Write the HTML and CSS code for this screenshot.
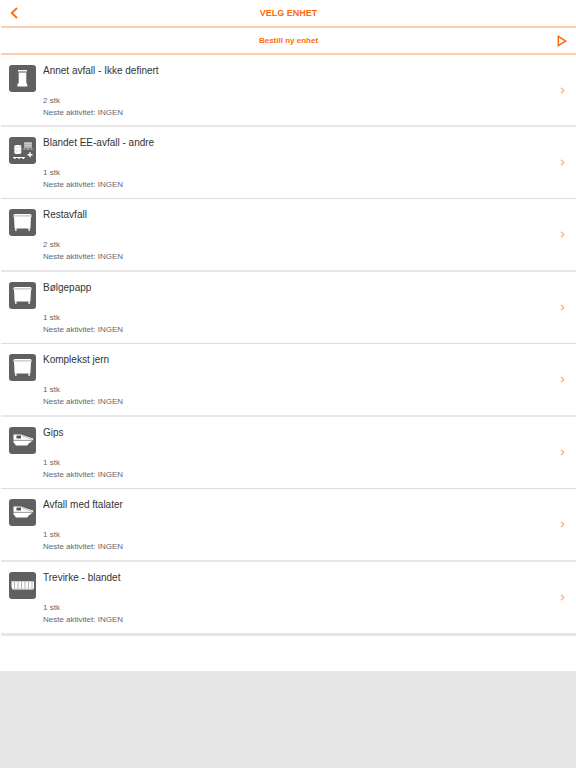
FILE: index.html
```html
<!DOCTYPE html>
<html lang="no">
<head>
    <meta charset="utf-8">
    <meta name="viewport" content="width=device-width, initial-scale=1">
    <title>Velg enhet</title>
    <link rel="stylesheet" href="styles.css">
</head>
<body>
    <!-- shared icons -->
    <svg class="icon-defs" width="0" height="0" aria-hidden="true">
        <symbol id="chevron" viewBox="0 0 5 7">
            <path d="M1 .8 3.7 3.5 1 6.2" fill="none" stroke="#ffb080" stroke-width="1.3"/>
        </symbol>
        <symbol id="bin" viewBox="0 0 27 27">
            <path d="M9 5h9v1.500H9zM9.700 7.500h7.600V18l.9 1v2.500H8.500V19l1.200-1z" fill="#fff"/>
            <path d="M9.500 7h8" stroke="#aaa" stroke-width=".7"/>
        </symbol>
        <symbol id="mixed" viewBox="0 0 27 27">
            <path d="M5.300 9c0-1.300 7-1.300 7 0v7c0 1.300-7 1.300-7 0z" fill="#fff"/>
            <path d="M5.300 9.500c1 1 6 1 7 0M5.300 13.300c1 .8 6 .8 7 0" fill="none" stroke="#bbb" stroke-width=".5"/>
            <path d="M15 5h8v6h-8z" fill="#a5a5a5"/>
            <path d="M15 6.500h8M15 8.500h8M17 5v6M19 5v6M21 5v6M15 12h8" stroke="#ddd" stroke-width=".5"/>
            <path d="M15 11.300v1.500M19 11.300v1.500M23 11.300v1.500" stroke="#ddd" stroke-width=".8"/>
            <path d="M4 20.500h12" stroke="#fff" stroke-width="1"/>
            <path d="M5 21.500h1.500M9.300 21.500h1.500M13.500 21.500H15" stroke="#fff" stroke-width="1"/>
            <path d="M21 15.200v5M18.500 17.700h5" stroke="#fff" stroke-width="1.400"/>
        </symbol>
        <symbol id="container" viewBox="0 0 27 27">
            <path d="M4.500 6q.5-1 1.500-1h15q1 0 1.500 1v2H22l-.6 11.500h-.6V22h-1.300v-2.500h-12V22H6.200v-2.500h-.6L5 8h-.5z" fill="#fff"/>
            <path d="M5 6.900h17" stroke="#aaa" stroke-width=".9"/>
        </symbol>
        <symbol id="skip" viewBox="0 0 27 27">
            <path d="M4.500 7.500H12l12.500 4.300-.6 1.200H4.500zM4.500 13.500h19.300L20.500 16l-.8.300-.8 1.700-1.500.5H6.800L6 17l-1.500-1.500z" fill="#fff"/>
            <path d="M7.500 8.500H12v3H7.500z" fill="#555"/>
            <path d="m12.500 8.800 10.500 3.500M4.500 13.200h19" stroke="#999" stroke-width=".6"/>
        </symbol>
        <symbol id="trailer" viewBox="0 0 27 27">
            <path d="M2.500 9H24l1 1.500V16l-1 1.500H3.500L2.500 15z" fill="#fff"/>
            <path d="M3 9.500h21M3.500 17h20" stroke="#bbb" stroke-width=".8"/>
            <path d="M5.500 10v6.500M9 10v6.500M12.500 10v6.500M16 10v6.500M19.500 10v6.500M23 10v6.500" stroke="#999" stroke-width=".8"/>
        </symbol>
    </svg>

    <div class="page">
        <header class="header">
            <button class="back" type="button" aria-label="Tilbake">
                <svg width="8" height="12" viewBox="0 0 8 12"><path d="M7 1 1.700 6 7 11" fill="none" stroke="#ff6a0d" stroke-width="1.800"/></svg>
            </button>
            <h1>VELG ENHET</h1>
        </header>
        <a class="order" href="#">
            <span>Bestill ny enhet</span>
            <svg width="10" height="12" viewBox="0 0 10 12"><path d="M1.300 1.300v9.400L8.700 6z" fill="none" stroke="#ff6a0d" stroke-width="1.500"/></svg>
        </a>

        <ul class="units">
            <li><a class="unit" href="#">
                <svg class="unit-icon"><use href="#bin"/></svg>
                <div class="unit-text"><h2>Annet avfall - Ikke definert</h2><p>2 stk</p><p>Neste aktivitet: INGEN</p></div>
                <svg class="chevron"><use href="#chevron"/></svg>
            </a></li>
            <li><a class="unit" href="#">
                <svg class="unit-icon"><use href="#mixed"/></svg>
                <div class="unit-text"><h2>Blandet EE-avfall - andre</h2><p>1 stk</p><p>Neste aktivitet: INGEN</p></div>
                <svg class="chevron"><use href="#chevron"/></svg>
            </a></li>
            <li><a class="unit" href="#">
                <svg class="unit-icon"><use href="#container"/></svg>
                <div class="unit-text"><h2>Restavfall</h2><p>2 stk</p><p>Neste aktivitet: INGEN</p></div>
                <svg class="chevron"><use href="#chevron"/></svg>
            </a></li>
            <li><a class="unit" href="#">
                <svg class="unit-icon"><use href="#container"/></svg>
                <div class="unit-text"><h2>Bølgepapp</h2><p>1 stk</p><p>Neste aktivitet: INGEN</p></div>
                <svg class="chevron"><use href="#chevron"/></svg>
            </a></li>
            <li><a class="unit" href="#">
                <svg class="unit-icon"><use href="#container"/></svg>
                <div class="unit-text"><h2>Komplekst jern</h2><p>1 stk</p><p>Neste aktivitet: INGEN</p></div>
                <svg class="chevron"><use href="#chevron"/></svg>
            </a></li>
            <li><a class="unit" href="#">
                <svg class="unit-icon"><use href="#skip"/></svg>
                <div class="unit-text"><h2>Gips</h2><p>1 stk</p><p>Neste aktivitet: INGEN</p></div>
                <svg class="chevron"><use href="#chevron"/></svg>
            </a></li>
            <li><a class="unit" href="#">
                <svg class="unit-icon"><use href="#skip"/></svg>
                <div class="unit-text"><h2>Avfall med ftalater</h2><p>1 stk</p><p>Neste aktivitet: INGEN</p></div>
                <svg class="chevron"><use href="#chevron"/></svg>
            </a></li>
            <li><a class="unit" href="#">
                <svg class="unit-icon"><use href="#trailer"/></svg>
                <div class="unit-text"><h2>Trevirke - blandet</h2><p>1 stk</p><p>Neste aktivitet: INGEN</p></div>
                <svg class="chevron"><use href="#chevron"/></svg>
            </a></li>
        </ul>
    </div>
</body>
</html>
```

FILE: styles.css
```css
* {
    box-sizing: border-box;
}
body {
    margin: 0;
    background-color: #e6e6e6;
    font-family: "Liberation Sans", Arial, sans-serif;
}
h1, h2, p, ul {
    margin: 0;
    padding: 0;
}
a {
    color: inherit;
    text-decoration: none;
}
.icon-defs {
    position: absolute;
}
.page {
    padding-bottom: 35px;
    padding-left: 1px;
    background-color: white;
}
.header, .order {
    display: grid;
    grid-template-columns: 24px 1fr 24px;
    align-items: center;
    border-bottom: 2px solid #ffcdaa;
    color: #ff6a0d;
    text-align: center;
}
.header {
    height: 28px;
}
.header h1 {
    font-size: 9px;
    line-height: 12px;
}
.back {
    display: flex;
    justify-content: flex-end;
    padding: 0 7px 0 0;
    border: 0;
    background: none;
    cursor: pointer;
}
.order {
    height: 27px;
    font-size: 8px;
    font-weight: bold;
    line-height: 12px;
}
.order span {
    grid-column: 2;
}
.order svg {
    justify-self: center;
    margin-right: 4px;
}
.units {
    list-style: none;
}
.units li {
    height: 73px;
    border-bottom: 2px solid #e6e6e6;
}
.units li:nth-child(even) {
    height: 72px;
    border-bottom: 1px solid #dcdcdc;
}
.units li:first-child {
    height: 72px;
}
.units li:last-child {
    height: 74px;
    border-bottom: 3px solid #e6e6e6;
}
.unit {
    display: flex;
    align-items: center;
    height: 100%;
    padding: 0 11px 0 8px;
}
.unit-icon {
    align-self: flex-start;
    width: 27px;
    height: 27px;
    margin-top: 10px;
    border-radius: 3px;
    background-color: #606060;
}
.unit-text {
    flex: 1;
    align-self: flex-start;
    padding: 10px 0 0 7px;
    color: #666;
    font-size: 8px;
    line-height: 12px;
}
.unit-text h2 {
    margin-bottom: 18px;
    color: #333;
    font-size: 10px;
    font-weight: normal;
    line-height: 12px;
}
.chevron {
    width: 5px;
    height: 7px;
}
```
